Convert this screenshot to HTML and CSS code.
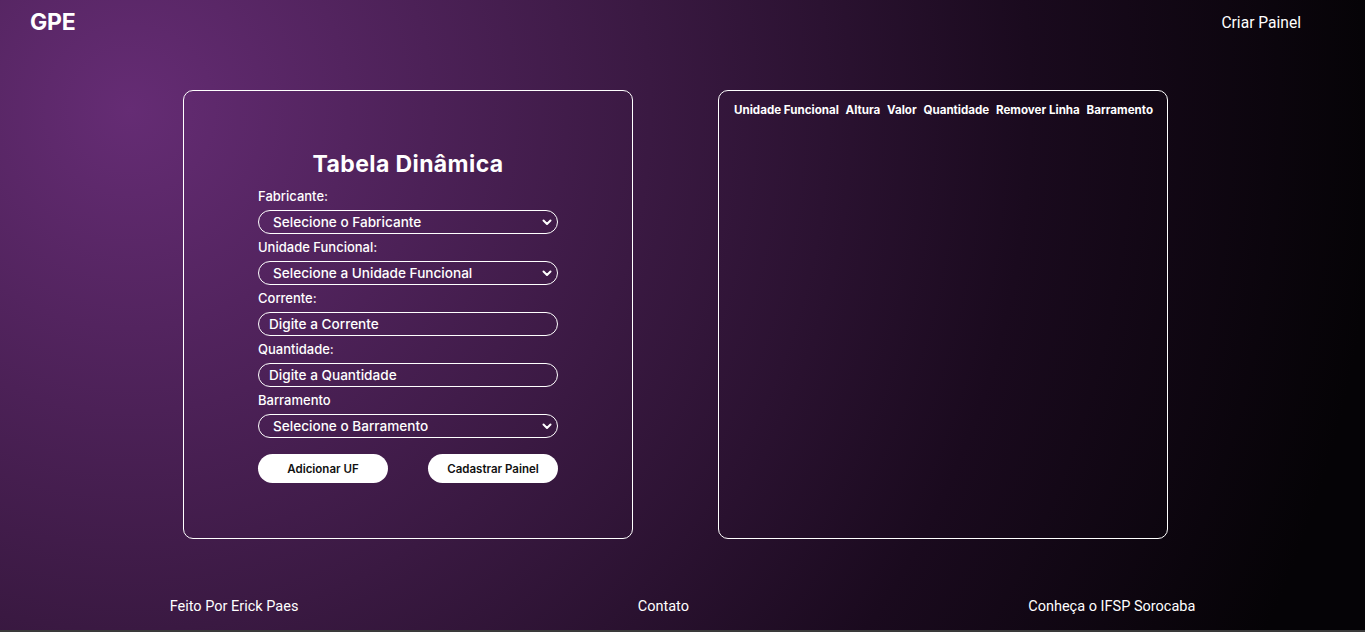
FILE: index.html
```html
<!DOCTYPE html>
<html lang="pt-BR">
<head>
<meta charset="utf-8">
<title>GPE - Tabela Dinâmica</title>
<link rel="stylesheet" href="styles.css">
</head>
<body>
<div class="page">
  <header class="topbar">
    <span class="logo">GPE</span>
    <nav class="nav"><a class="nav-link" href="#">Criar Painel</a></nav>
  </header>

  <main class="content">
    <section class="card form-card">
      <h1 class="title">Tabela Dinâmica</h1>
      <form class="form">
        <label class="label">Fabricante:</label>
        <div class="field select">
          <span>Selecione o Fabricante</span>
          <svg class="chev" width="10" height="7" viewBox="0 0 10 7"><path d="M1.5 1.5 L5 5 L8.5 1.5" fill="none" stroke="#fff" stroke-width="2" stroke-linecap="round" stroke-linejoin="round"/></svg>
        </div>

        <label class="label">Unidade Funcional:</label>
        <div class="field select">
          <span>Selecione a Unidade Funcional</span>
          <svg class="chev" width="10" height="7" viewBox="0 0 10 7"><path d="M1.5 1.5 L5 5 L8.5 1.5" fill="none" stroke="#fff" stroke-width="2" stroke-linecap="round" stroke-linejoin="round"/></svg>
        </div>

        <label class="label">Corrente:</label>
        <div class="field input"><span>Digite a Corrente</span></div>

        <label class="label">Quantidade:</label>
        <div class="field input"><span>Digite a Quantidade</span></div>

        <label class="label">Barramento</label>
        <div class="field select">
          <span>Selecione o Barramento</span>
          <svg class="chev" width="10" height="7" viewBox="0 0 10 7"><path d="M1.5 1.5 L5 5 L8.5 1.5" fill="none" stroke="#fff" stroke-width="2" stroke-linecap="round" stroke-linejoin="round"/></svg>
        </div>

        <div class="actions">
          <button type="button" class="btn">Adicionar UF</button>
          <button type="button" class="btn">Cadastrar Painel</button>
        </div>
      </form>
    </section>

    <section class="card table-card">
      <div class="thead">
        <span class="th">Unidade Funcional</span>
        <span class="th">Altura</span>
        <span class="th">Valor</span>
        <span class="th">Quantidade</span>
        <span class="th">Remover Linha</span>
        <span class="th">Barramento</span>
      </div>
    </section>
  </main>

  <footer class="footer">
    <span class="foot-item">Feito Por Erick Paes</span>
    <span class="foot-item">Contato</span>
    <span class="foot-item">Conheça o IFSP Sorocaba</span>
  </footer>
</div>
</body>
</html>
```

FILE: styles.css
```css
html, body {
  margin: 0;
  padding: 0;
  background: #3a3a3a;
}

.page {
  height: 630px;
  display: flex;
  flex-direction: column;
  color: #fff;
  background: radial-gradient(circle at 130px 110px, #652c74 0px, #3a1942 520px, #1a0a1e 900px, #050306 1250px);
  font-family: Inter, "Noto Sans", sans-serif;
}

.topbar {
  height: 44px;
  display: flex;
  align-items: center;
  justify-content: space-between;
  padding: 0 64px 0 30px;
}

.logo {
  font-family: Inter, sans-serif;
  font-weight: 700;
  font-size: 23px;
  letter-spacing: -0.2px;
}

.nav-link {
  color: #fff;
  text-decoration: none;
  font-family: Roboto, "Liberation Sans", sans-serif;
  font-size: 15.6px;
}

.content {
  display: flex;
  gap: 85px;
  padding: 46px 0 0 183px;
}

.card {
  box-sizing: border-box;
  width: 450px;
  height: 449px;
  border: 1px solid #fff;
  border-radius: 10px;
}

.form-card {
  padding: 59px 74px 0 74px;
}

.title {
  margin: 0;
  text-align: center;
  font-size: 23px;
  line-height: 28px;
  font-weight: 700;
  letter-spacing: 0.4px;
}

.form {
  display: flex;
  flex-direction: column;
  margin-top: 9px;
}

.label {
  font-size: 13px;
  font-weight: 500;
  line-height: 18px;
  margin-bottom: 5px;
}

.field {
  box-sizing: border-box;
  height: 24px;
  border: 1px solid #fff;
  border-radius: 12px;
  display: flex;
  align-items: center;
  justify-content: space-between;
  font-size: 13.6px;
  font-weight: 500;
  margin-bottom: 4px;
}

.select {
  padding: 0 5px 0 14px;
}

.input {
  padding: 0 10px;
}

.chev {
  display: block;
}

.actions {
  display: flex;
  justify-content: space-between;
  margin-top: 12px;
}

.btn {
  width: 130px;
  height: 29px;
  border: none;
  border-radius: 15px;
  background: #fff;
  color: #111;
  font-family: Inter, sans-serif;
  font-size: 11.5px;
  font-weight: 600;
  cursor: pointer;
}

.table-card {
  padding: 12px 14px 0 15px;
}

.thead {
  display: flex;
  justify-content: space-between;
  font-size: 11.6px;
  font-weight: 700;
  line-height: 14px;
}

.footer {
  flex: 1;
  display: flex;
  justify-content: space-around;
  align-items: flex-start;
  padding-top: 59px;
}

.foot-item {
  font-family: Roboto, "Liberation Sans", sans-serif;
  font-size: 14.5px;
  line-height: 18px;
}
```
